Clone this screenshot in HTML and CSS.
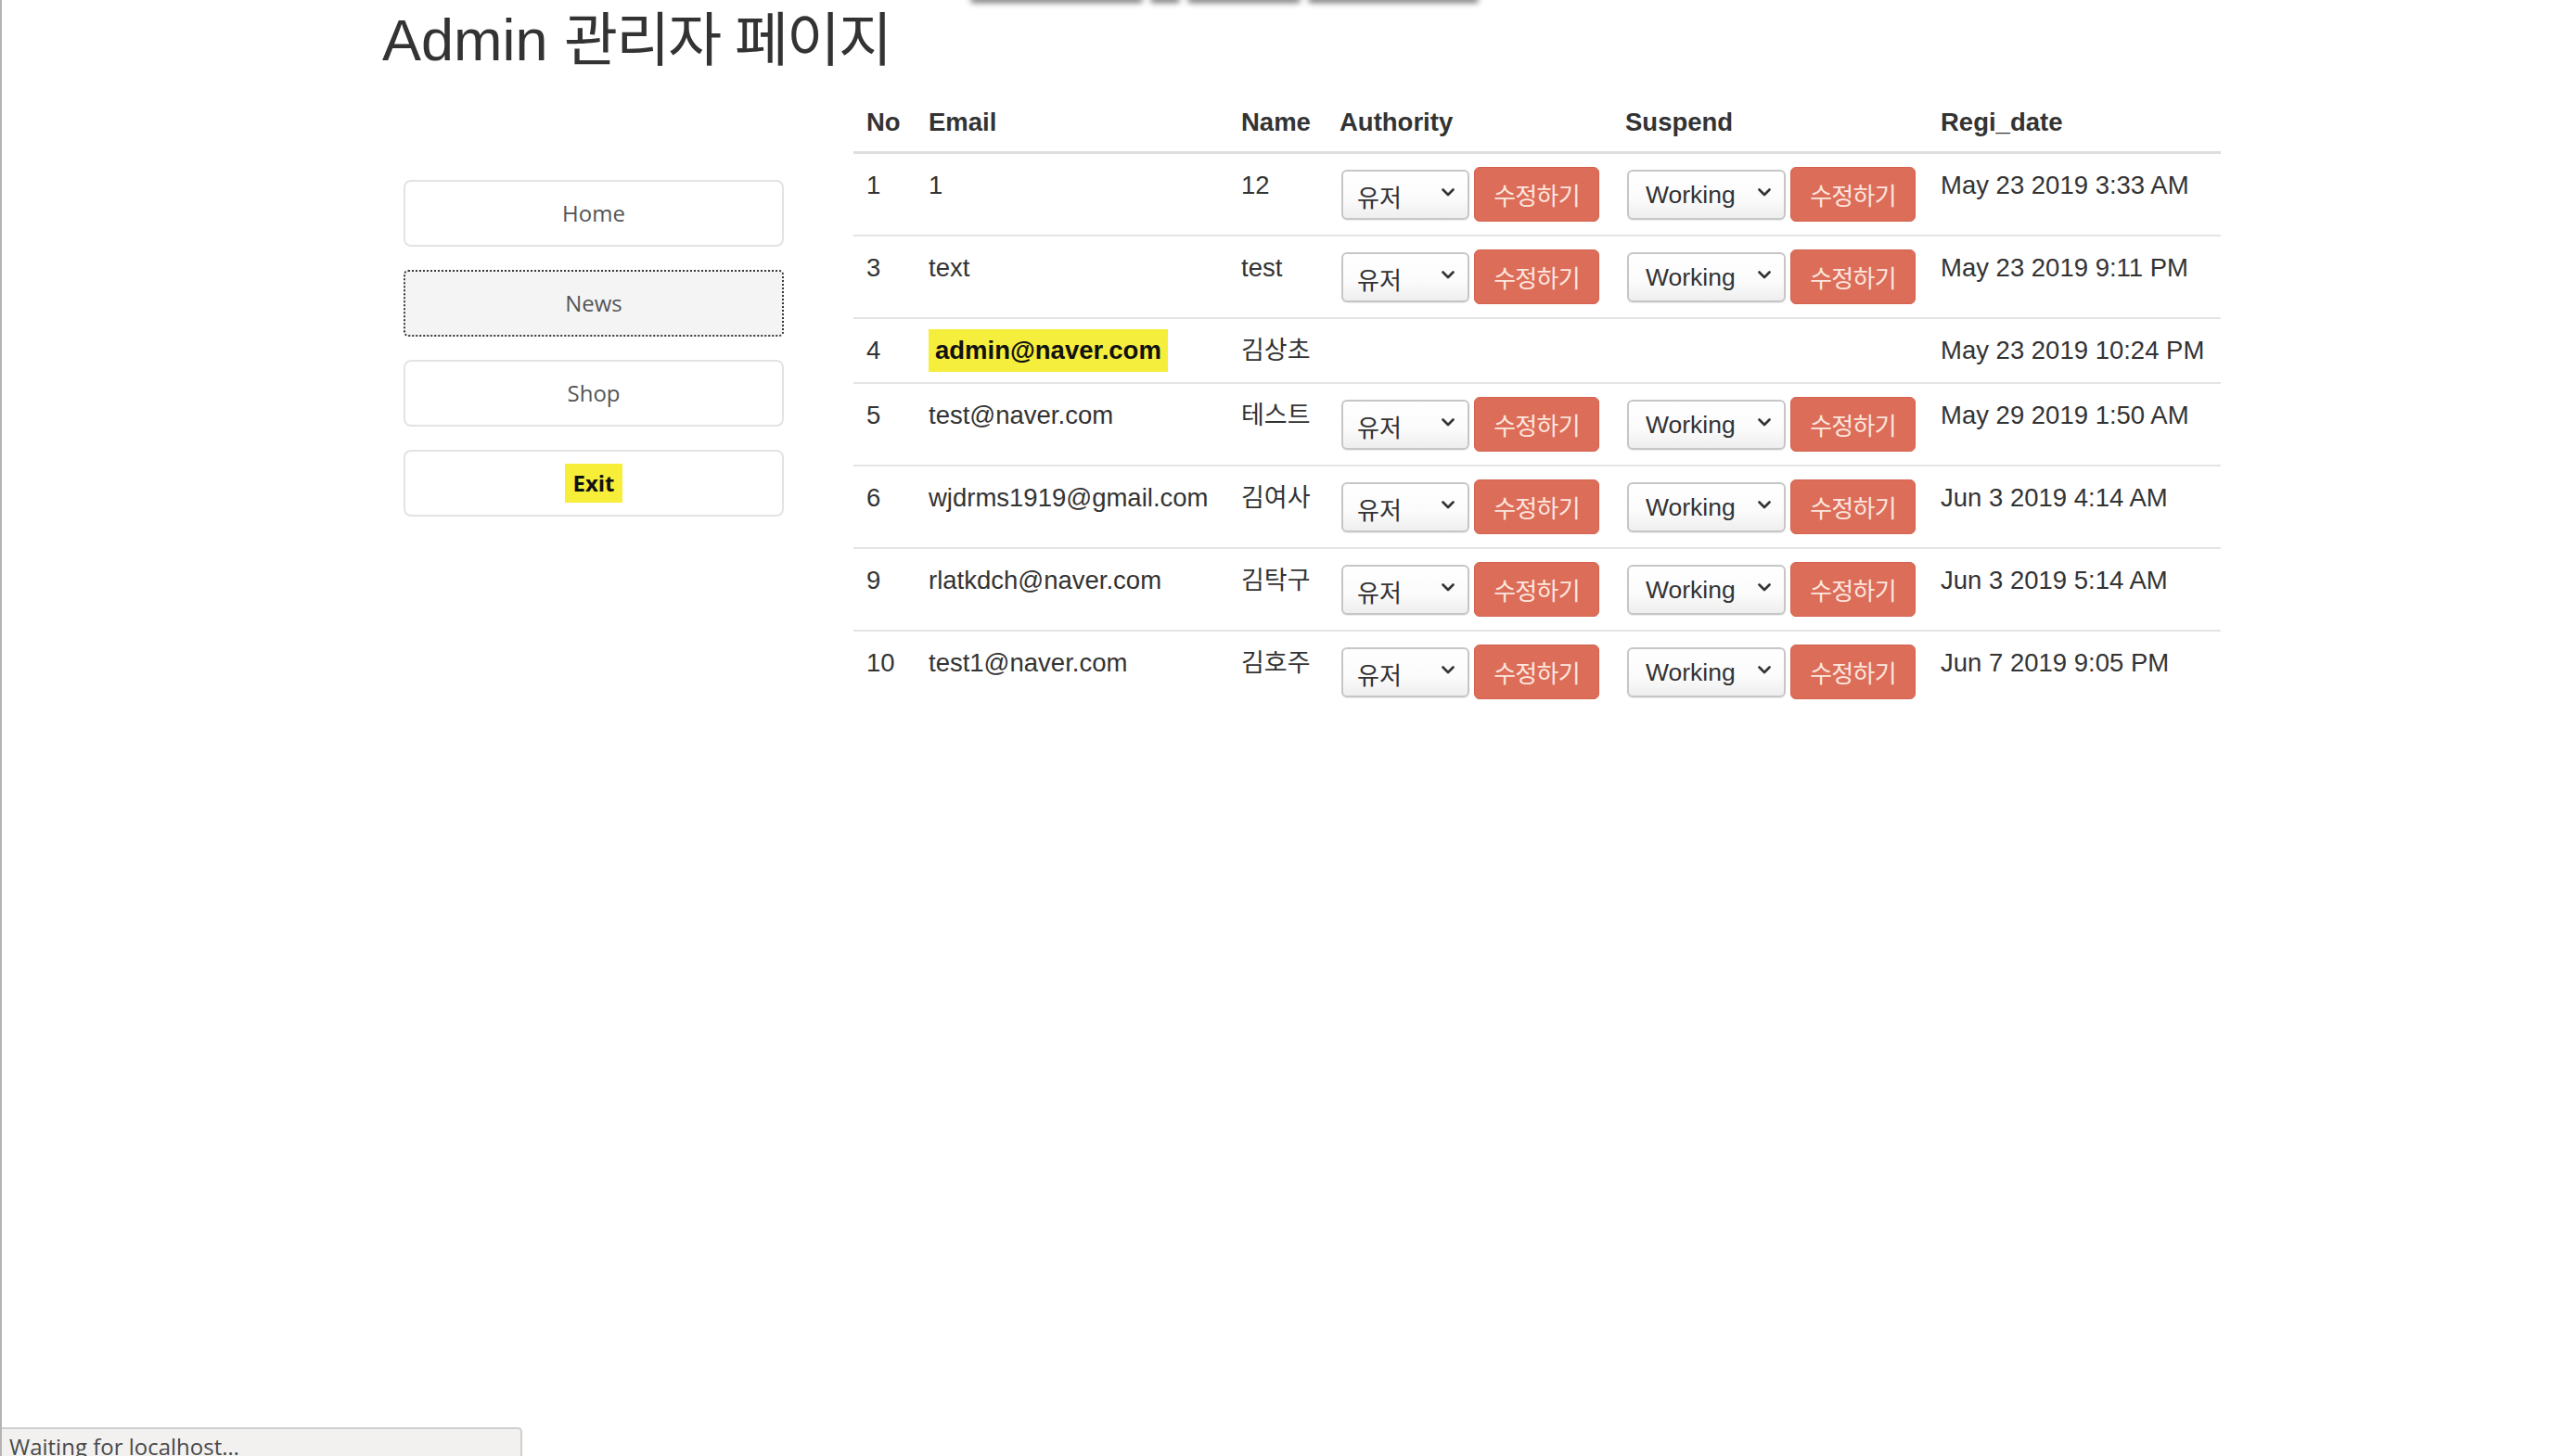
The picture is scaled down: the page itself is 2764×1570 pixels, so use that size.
FILE: index.html
```html
<!DOCTYPE html>
<html lang="ko">
<head>
<meta charset="utf-8">
<title>Admin 관리자 페이지</title>
<link rel="stylesheet" href="styles.css">
</head>
<body>
<div class="page">
  <div class="top-blur" aria-hidden="true">
    <span class="seg s1"></span><span class="seg s2"></span><span class="seg s3"></span><span class="seg s4"></span>
  </div>

  <h1 class="title">Admin <span class="ko">관리자 페이지</span></h1>

  <div class="main">
    <nav class="sidebar">
      <a class="nav-item" href="#">Home</a>
      <a class="nav-item nav-focus" href="#">News</a>
      <a class="nav-item" href="#">Shop</a>
      <a class="nav-item" href="#"><span class="exit-mark">Exit</span></a>
    </nav>

    <table class="users">
      <colgroup>
        <col class="c-no"><col class="c-email"><col class="c-name"><col class="c-auth"><col class="c-susp"><col class="c-date">
      </colgroup>
      <thead>
        <tr><th>No</th><th>Email</th><th>Name</th><th>Authority</th><th>Suspend</th><th>Regi_date</th></tr>
      </thead>
      <tbody>
        <tr>
          <td>1</td><td>1</td><td>12</td>
          <td><div class="ctrls"><span class="sel sel-auth"><select><option>유저</option></select><svg class="chev" viewBox="0 0 14 9"><path d="M1.5 1.5 L7 7 L12.5 1.5"/></svg></span><button class="btn-edit">수정하기</button></div></td>
          <td><div class="ctrls"><span class="sel sel-susp"><select><option>Working</option></select><svg class="chev" viewBox="0 0 14 9"><path d="M1.5 1.5 L7 7 L12.5 1.5"/></svg></span><button class="btn-edit">수정하기</button></div></td>
          <td>May 23 2019 3:33 AM</td>
        </tr>
        <tr>
          <td>3</td><td>text</td><td>test</td>
          <td><div class="ctrls"><span class="sel sel-auth"><select><option>유저</option></select><svg class="chev" viewBox="0 0 14 9"><path d="M1.5 1.5 L7 7 L12.5 1.5"/></svg></span><button class="btn-edit">수정하기</button></div></td>
          <td><div class="ctrls"><span class="sel sel-susp"><select><option>Working</option></select><svg class="chev" viewBox="0 0 14 9"><path d="M1.5 1.5 L7 7 L12.5 1.5"/></svg></span><button class="btn-edit">수정하기</button></div></td>
          <td>May 23 2019 9:11 PM</td>
        </tr>
        <tr>
          <td>4</td><td><mark class="hl">admin@naver.com</mark></td><td class="ko-name">김상초</td>
          <td></td><td></td>
          <td>May 23 2019 10:24 PM</td>
        </tr>
        <tr>
          <td>5</td><td>test@naver.com</td><td class="ko-name">테스트</td>
          <td><div class="ctrls"><span class="sel sel-auth"><select><option>유저</option></select><svg class="chev" viewBox="0 0 14 9"><path d="M1.5 1.5 L7 7 L12.5 1.5"/></svg></span><button class="btn-edit">수정하기</button></div></td>
          <td><div class="ctrls"><span class="sel sel-susp"><select><option>Working</option></select><svg class="chev" viewBox="0 0 14 9"><path d="M1.5 1.5 L7 7 L12.5 1.5"/></svg></span><button class="btn-edit">수정하기</button></div></td>
          <td>May 29 2019 1:50 AM</td>
        </tr>
        <tr>
          <td>6</td><td>wjdrms1919@gmail.com</td><td class="ko-name">김여사</td>
          <td><div class="ctrls"><span class="sel sel-auth"><select><option>유저</option></select><svg class="chev" viewBox="0 0 14 9"><path d="M1.5 1.5 L7 7 L12.5 1.5"/></svg></span><button class="btn-edit">수정하기</button></div></td>
          <td><div class="ctrls"><span class="sel sel-susp"><select><option>Working</option></select><svg class="chev" viewBox="0 0 14 9"><path d="M1.5 1.5 L7 7 L12.5 1.5"/></svg></span><button class="btn-edit">수정하기</button></div></td>
          <td>Jun 3 2019 4:14 AM</td>
        </tr>
        <tr>
          <td>9</td><td>rlatkdch@naver.com</td><td class="ko-name">김탁구</td>
          <td><div class="ctrls"><span class="sel sel-auth"><select><option>유저</option></select><svg class="chev" viewBox="0 0 14 9"><path d="M1.5 1.5 L7 7 L12.5 1.5"/></svg></span><button class="btn-edit">수정하기</button></div></td>
          <td><div class="ctrls"><span class="sel sel-susp"><select><option>Working</option></select><svg class="chev" viewBox="0 0 14 9"><path d="M1.5 1.5 L7 7 L12.5 1.5"/></svg></span><button class="btn-edit">수정하기</button></div></td>
          <td>Jun 3 2019 5:14 AM</td>
        </tr>
        <tr>
          <td>10</td><td>test1@naver.com</td><td class="ko-name">김호주</td>
          <td><div class="ctrls"><span class="sel sel-auth"><select><option>유저</option></select><svg class="chev" viewBox="0 0 14 9"><path d="M1.5 1.5 L7 7 L12.5 1.5"/></svg></span><button class="btn-edit">수정하기</button></div></td>
          <td><div class="ctrls"><span class="sel sel-susp"><select><option>Working</option></select><svg class="chev" viewBox="0 0 14 9"><path d="M1.5 1.5 L7 7 L12.5 1.5"/></svg></span><button class="btn-edit">수정하기</button></div></td>
          <td>Jun 7 2019 9:05 PM</td>
        </tr>
      </tbody>
    </table>
  </div>

  <div class="statusbar">Waiting for localhost…</div>
</div>
</body>
</html>
```

FILE: styles.css
```css
html, body {
  margin: 0;
  padding: 0;
  background: #ffffff;
}

body {
  font-family: "Liberation Sans", "Noto Sans CJK KR", sans-serif;
  font-size: 27.5px;
  line-height: 40px;
  color: #333333;
}

.page {
  position: relative;
  min-height: 100vh;
  box-sizing: border-box;
  border-left: 2px solid #b4b4b4;
  padding-left: 410px;
  overflow: hidden;
}

/* blurred fragment at the very top edge */
.top-blur {
  position: absolute;
  top: -4px;
  left: 1044px;
  display: flex;
  gap: 8px;
  filter: blur(3px);
  opacity: 0.8;
}
.seg {
  display: block;
  height: 7px;
  background: #555555;
  border-radius: 4px;
}
.s1 { width: 186px; }
.s2 { width: 32px; }
.s3 { width: 122px; }
.s4 { width: 184px; }

.title {
  margin: 0;
  padding-top: 9px;
  font-size: 63px;
  line-height: 69px;
  font-weight: 400;
  color: #333333;
  white-space: nowrap;
}
.title .ko {
  letter-spacing: -0.03em;
}

.main {
  display: flex;
  align-items: flex-start;
  margin-top: 20px;
}

/* sidebar */
.sidebar {
  display: flex;
  flex-direction: column;
  gap: 25px;
  width: 410px;
  margin-left: 23px;
  margin-top: 96px;
  flex: none;
}
.nav-item {
  display: flex;
  align-items: center;
  justify-content: center;
  height: 72px;
  box-sizing: border-box;
  border: 2px solid #e3e3e3;
  border-radius: 8px;
  font-family: "Open Sans", "DejaVu Sans", sans-serif;
  font-size: 24px;
  color: #555555;
  text-decoration: none;
  background: #ffffff;
}
.nav-focus {
  background: #f4f4f4;
  border: 2px dotted #3a3a3a;
  border-radius: 5px;
}
.exit-mark {
  display: inline-block;
  background: #f7ee3a;
  color: #111111;
  font-weight: 700;
  line-height: 32px;
  padding: 5px 8px;
}

/* table */
.users {
  width: 1474px;
  margin-left: 75px;
  border-collapse: collapse;
  table-layout: fixed;
  flex: none;
}
.c-no { width: 67px; }
.c-email { width: 337px; }
.c-name { width: 106px; }
.c-auth { width: 308px; }
.c-susp { width: 340px; }
.c-date { width: 316px; }

.users th {
  text-align: left;
  font-weight: 700;
  padding: 14px 14px 11px;
  border-bottom: 3px solid #dedede;
  white-space: nowrap;
}
.users td {
  vertical-align: top;
  padding: 14px;
  border-top: 2px solid #e4e4e4;
  white-space: nowrap;
}
.users tbody tr:first-child td {
  border-top: 0;
}
.ko-name {
  font-size: 27px;
}

.hl {
  background: #f6ee3c;
  color: #111111;
  font-weight: 700;
  padding: 7px 7px 8px;
}

.ctrls {
  display: flex;
  align-items: center;
  gap: 5px;
  margin-left: 2px;
}

.sel {
  position: relative;
  display: block;
  flex: none;
}
.sel select {
  display: block;
  appearance: none;
  -webkit-appearance: none;
  box-sizing: border-box;
  height: 54px;
  margin: 0;
  border: 2px solid #c6c6c6;
  border-radius: 6px;
  background: linear-gradient(#ffffff 0%, #fbfbfb 60%, #eeeeee 100%);
  box-shadow: 0 1px 1px rgba(0, 0, 0, 0.08);
  color: #333333;
  font-family: "Liberation Sans", "Noto Sans CJK KR", sans-serif;
  font-size: 26.5px;
  outline: none;
}
.sel-auth select {
  width: 138px;
  padding: 8px 0 0 15px;
  font-size: 26px;
}
.sel-susp select {
  width: 171px;
  padding: 0 0 0 18px;
}
.chev {
  position: absolute;
  top: 20px;
  right: 16px;
  width: 14px;
  height: 9px;
  fill: none;
  stroke: #333333;
  stroke-width: 2.6;
  stroke-linecap: round;
  stroke-linejoin: round;
  pointer-events: none;
}

.btn-edit {
  display: block;
  flex: none;
  width: 135px;
  height: 59px;
  margin: 0;
  padding: 0;
  box-sizing: border-box;
  border: 1px solid #d4624e;
  border-radius: 6px;
  background: #dc6d59;
  color: #fde6de;
  font-family: "Noto Sans CJK KR", sans-serif;
  font-size: 26px;
  letter-spacing: -0.03em;
  cursor: pointer;
}

/* browser status bubble */
.statusbar {
  position: absolute;
  left: 0;
  bottom: 0;
  width: 561px;
  height: 31px;
  box-sizing: border-box;
  padding: 2px 0 0 8px;
  background: #f2f1f0;
  border-top: 2px solid #cfcfcf;
  border-right: 2px solid #cfcfcf;
  border-top-right-radius: 5px;
  font-family: "Open Sans", "DejaVu Sans", sans-serif;
  font-size: 24px;
  line-height: 33px;
  color: #4a4a4a;
  overflow: hidden;
  white-space: nowrap;
}
```
